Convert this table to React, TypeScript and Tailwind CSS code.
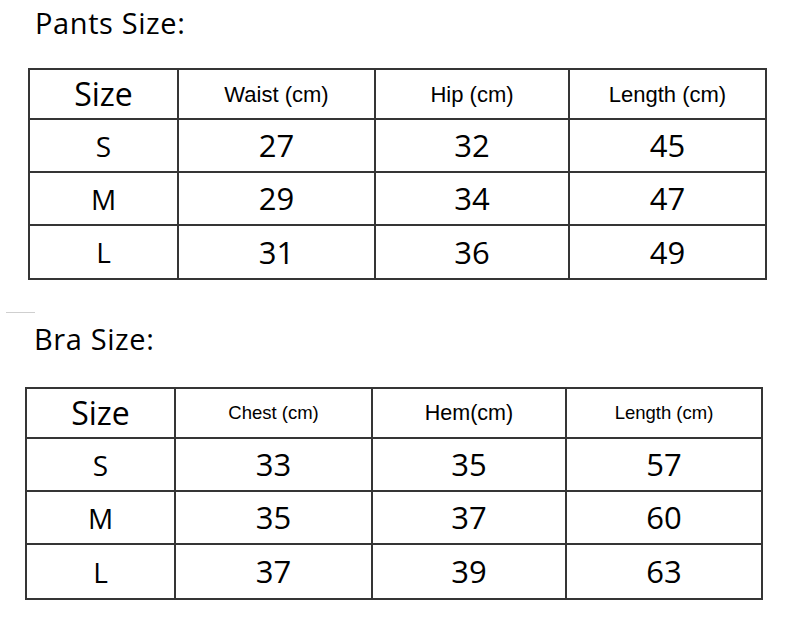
const sans = "font-['Open_Sans',sans-serif]";
const arial = "font-['Liberation_Sans',Arial,sans-serif]";

type Table = {
  widths: number[];
  heights: number[];
  headers: { label: string; size: string }[];
  rows: string[][];
};

const widthClass: Record<number, string> = {
  149: "w-[149px]",
  194: "w-[194px]",
  196: "w-[196px]",
  197: "w-[197px]",
};

const heightClass: Record<number, string> = {
  50: "h-[50px]",
  53: "h-[53px]",
  54: "h-[54px]",
  55: "h-[55px]",
};

const pants: Table = {
  widths: [149, 197, 194, 197],
  heights: [50, 53, 53, 54],
  headers: [
    { label: "Waist (cm)", size: "text-[22px]" },
    { label: "Hip (cm)", size: "text-[22px]" },
    { label: "Length (cm)", size: "text-[22px]" },
  ],
  rows: [
    ["S", "27", "32", "45"],
    ["M", "29", "34", "47"],
    ["L", "31", "36", "49"],
  ],
};

const bra: Table = {
  widths: [149, 197, 194, 196],
  heights: [50, 53, 53, 55],
  headers: [
    { label: "Chest (cm)", size: "text-[18.5px]" },
    { label: "Hem(cm)", size: "text-[21.5px]" },
    { label: "Length (cm)", size: "text-[18.5px]" },
  ],
  rows: [
    ["S", "33", "35", "57"],
    ["M", "35", "37", "60"],
    ["L", "37", "39", "63"],
  ],
};

const cell = "flex items-center justify-center border-r-2 border-b-2 border-[#353535] text-black";

function SizeTable({ table }: { table: Table }) {
  return (
    <div className="inline-flex flex-col border-l-2 border-t-2 border-[#353535]">
      {/* header row */}
      <div className={`flex ${heightClass[table.heights[0]]}`}>
        <div className={`${cell} ${widthClass[table.widths[0]]} ${sans} text-[32px]`}>Size</div>
        {table.headers.map((h, i) => (
          <div
            key={h.label}
            className={`${cell} ${widthClass[table.widths[i + 1]]} ${arial} ${h.size} text-[#111]`}
          >
            {h.label}
          </div>
        ))}
      </div>
      {table.rows.map((row, r) => (
        <div key={row[0]} className={`flex ${heightClass[table.heights[r + 1]]}`}>
          {row.map((v, c) => (
            <div
              key={c}
              className={`${cell} ${widthClass[table.widths[c]]} ${sans} ${
                c === 0 ? "text-[28px]" : "text-[31px]"
              }`}
            >
              {v}
            </div>
          ))}
        </div>
      ))}
    </div>
  );
}

export default function App() {
  return (
    <div className="w-[800px] h-[621px] bg-white overflow-hidden">
      <p className={`${sans} text-[29px] leading-[29px] tracking-[0.6px] pl-[35px] pt-[8px] text-black`}>
        Pants Size:
      </p>
      <div className="pl-[28px] mt-[31px]">
        <SizeTable table={pants} />
      </div>
      {/* faint divider */}
      <div className="ml-[6px] mt-[32px] w-[29px] border-t border-[#cfcfcf]" />
      <p className={`${sans} text-[29px] leading-[29px] tracking-[0.6px] pl-[34px] mt-[11px] text-black`}>
        Bra Size:
      </p>
      <div className="pl-[25px] mt-[34px]">
        <SizeTable table={bra} />
      </div>
    </div>
  );
}
